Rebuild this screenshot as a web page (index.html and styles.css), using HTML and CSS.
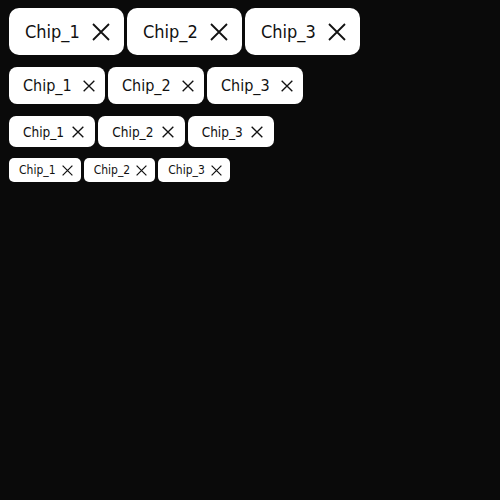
FILE: index.html
```html
<!DOCTYPE html>
<html>
<head>
<meta charset="utf-8">
<link rel="stylesheet" href="styles.css">
</head>
<body>
<div class="rows">
  <div class="row xl">
    <span class="chip"><span class="label">Chip_1</span><svg class="x" viewBox="0 0 18 18"><path d="M1 1L17 17M17 1L1 17"/></svg></span>
    <span class="chip"><span class="label">Chip_2</span><svg class="x" viewBox="0 0 18 18"><path d="M1 1L17 17M17 1L1 17"/></svg></span>
    <span class="chip"><span class="label">Chip_3</span><svg class="x" viewBox="0 0 18 18"><path d="M1 1L17 17M17 1L1 17"/></svg></span>
  </div>
  <div class="row lg">
    <span class="chip"><span class="label">Chip_1</span><svg class="x" viewBox="0 0 18 18"><path d="M1 1L17 17M17 1L1 17"/></svg></span>
    <span class="chip"><span class="label">Chip_2</span><svg class="x" viewBox="0 0 18 18"><path d="M1 1L17 17M17 1L1 17"/></svg></span>
    <span class="chip"><span class="label">Chip_3</span><svg class="x" viewBox="0 0 18 18"><path d="M1 1L17 17M17 1L1 17"/></svg></span>
  </div>
  <div class="row md">
    <span class="chip"><span class="label">Chip_1</span><svg class="x" viewBox="0 0 18 18"><path d="M1 1L17 17M17 1L1 17"/></svg></span>
    <span class="chip"><span class="label">Chip_2</span><svg class="x" viewBox="0 0 18 18"><path d="M1 1L17 17M17 1L1 17"/></svg></span>
    <span class="chip"><span class="label">Chip_3</span><svg class="x" viewBox="0 0 18 18"><path d="M1 1L17 17M17 1L1 17"/></svg></span>
  </div>
  <div class="row sm">
    <span class="chip"><span class="label">Chip_1</span><svg class="x" viewBox="0 0 18 18"><path d="M1 1L17 17M17 1L1 17"/></svg></span>
    <span class="chip"><span class="label">Chip_2</span><svg class="x" viewBox="0 0 18 18"><path d="M1 1L17 17M17 1L1 17"/></svg></span>
    <span class="chip"><span class="label">Chip_3</span><svg class="x" viewBox="0 0 18 18"><path d="M1 1L17 17M17 1L1 17"/></svg></span>
  </div>
</div>
</body>
</html>
```
FILE: styles.css
```css
html, body {
  margin: 0;
  padding: 0;
  background: #0a0a0a;
  height: 100%;
}
body {
  padding: 8px 8px 8px 9px;
  box-sizing: border-box;
  font-family: "DejaVu Sans Condensed", "DejaVu Sans", sans-serif;
  font-stretch: condensed;
  color: #111;
}
.rows {
  display: flex;
  flex-direction: column;
  gap: 12px;
}
.row {
  display: flex;
  gap: 3px;
}
.chip {
  display: flex;
  align-items: center;
  background: #fff;
  box-sizing: border-box;
}
.label {
  flex: 1;
  white-space: nowrap;
}
.x {
  display: block;
  flex: none;
  fill: none;
  stroke: #111;
}
.xl .chip { width: 115px; height: 47px; padding: 0 14px 0 16px; border-radius: 10px; font-size: 18px; }
.xl .x { width: 18px; height: 18px; stroke-width: 1.8; }
.lg .chip { width: 96px; height: 37px; padding: 0 10px 0 14px; border-radius: 8px; font-size: 16px; }
.lg .x { width: 12px; height: 12px; stroke-width: 2; }
.md .chip { width: 86.33px; height: 31px; padding: 0 11px 0 14px; border-radius: 7px; font-size: 13.5px; }
.md .x { width: 12px; height: 12px; stroke-width: 2; }
.sm { margin-top: -1px; }
.sm .chip { width: 71.67px; height: 24px; padding: 0 8px 0 10px; border-radius: 5px; font-size: 12px; }
.sm .x { width: 11px; height: 11px; stroke-width: 2; }
```
